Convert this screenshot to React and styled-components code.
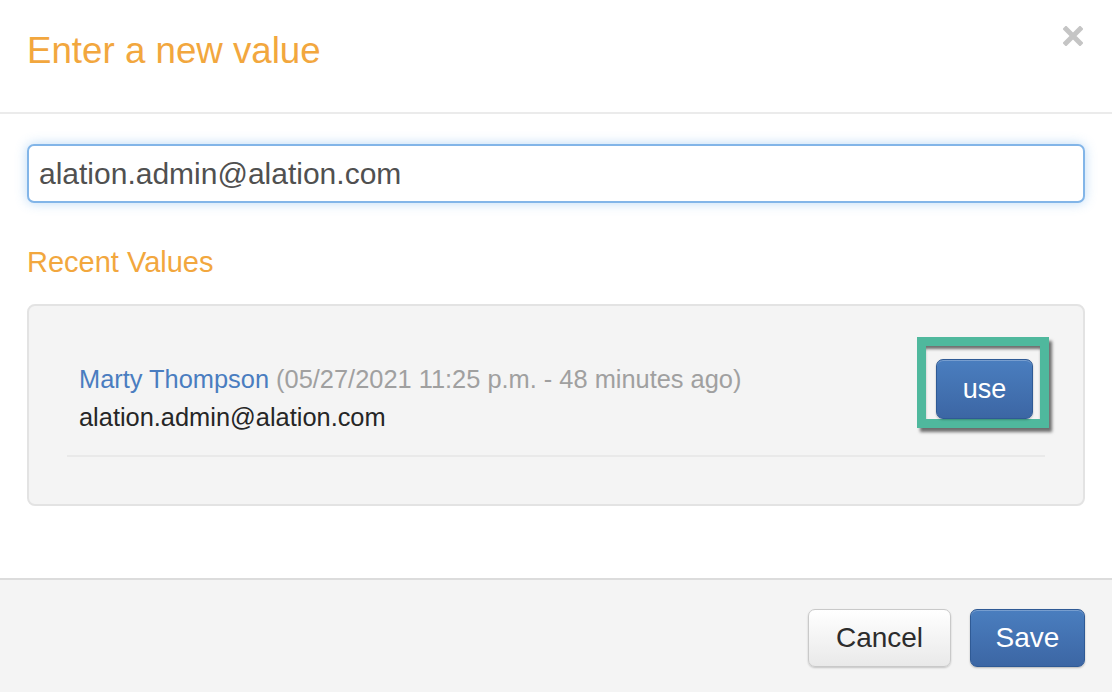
import React, { useEffect, useRef } from "react"
import styled, { createGlobalStyle } from "styled-components"

const GlobalStyle = createGlobalStyle`
  html, body {
    margin: 0;
    padding: 0;
    background: #ffffff;
  }
  body {
    font-family: "Liberation Sans", Arial, sans-serif;
  }
  * {
    box-sizing: border-box;
  }
`

const Modal = styled.div`
  display: flex;
  flex-direction: column;
  width: 1112px;
  height: 692px;
  background: #ffffff;
  overflow: hidden;
`

const Header = styled.div`
  display: flex;
  justify-content: space-between;
  align-items: flex-start;
  height: 114px;
  padding: 31px 29px 0 27px;
  border-bottom: 2px solid #ebebeb;
`

const Title = styled.h1`
  margin: 0;
  font-size: 36.7px;
  line-height: 40px;
  font-weight: normal;
  color: #f2a73e;
`

const CloseButton = styled.button`
  display: flex;
  margin-top: -5px;
  padding: 0;
  border: 0;
  background: transparent;
  cursor: pointer;
`

const Body = styled.div`
  flex: 1;
  display: flex;
  flex-direction: column;
  padding: 30px 27px 0 27px;
`

const ValueInput = styled.input`
  width: 100%;
  height: 59px;
  padding: 0 10px;
  border: 2px solid #82b5e8;
  border-radius: 7px;
  box-shadow: 0 0 12px rgba(102, 170, 235, 0.45);
  font-family: "Liberation Sans", Arial, sans-serif;
  font-size: 30px;
  color: #505050;
  outline: none;
  caret-color: #333;
`

const SectionTitle = styled.h2`
  margin: 42px 0 25px 0;
  font-size: 29px;
  line-height: 34px;
  font-weight: normal;
  color: #f2a73e;
`

const Panel = styled.div`
  padding: 31px 38px 47px 38px;
  background: #f4f4f4;
  border: 2px solid #e3e3e3;
  border-radius: 8px;
`

const Row = styled.div`
  display: flex;
  justify-content: space-between;
  align-items: flex-start;
  padding: 0 0 19px 12px;
  border-bottom: 2px solid #e9e9e9;
`

const Info = styled.div`
  padding-top: 23px;
  font-size: 25.4px;
  line-height: 38px;
`

const Author = styled.a`
  color: #4a7dc0;
  text-decoration: none;
`

const Meta = styled.span`
  color: #a0a0a0;
`

const Value = styled.div`
  color: #262626;
`

const Highlight = styled.div`
  width: 132px;
  height: 91px;
  margin-right: -4px;
  padding: 13px 7px 0 10px;
  border: 9px solid #4fb89d;
  background: #f4f4f4;
  box-shadow: inset 0 4px 3px -1px rgba(0, 0, 0, 0.55), 3px 4px 3px rgba(0, 0, 0, 0.55);
`

const BlueButton = styled.button`
  display: flex;
  align-items: center;
  justify-content: center;
  width: ${p => p.w}px;
  height: ${p => p.h}px;
  padding: 0;
  border: 1px solid #2f5a95;
  border-radius: 7px;
  background: linear-gradient(#4a7ebf, #3c66a4);
  box-shadow: inset 0 1px 0 rgba(255, 255, 255, 0.25), 0 1px 2px rgba(0, 0, 0, 0.25);
  color: #ffffff;
  font-family: "Liberation Sans", Arial, sans-serif;
  font-size: ${p => p.size}px;
  cursor: pointer;
`

const Footer = styled.div`
  display: flex;
  justify-content: flex-end;
  gap: 19px;
  height: 114px;
  padding: 29px 27px 0 0;
  border-top: 2px solid #dcdcdc;
  background: #f4f4f4;
`

const DefaultButton = styled.button`
  display: flex;
  align-items: center;
  justify-content: center;
  width: 143px;
  height: 58px;
  padding: 0;
  border: 1px solid #c9c9c9;
  border-radius: 7px;
  background: linear-gradient(#ffffff, #e9e9e9);
  box-shadow: 0 1px 2px rgba(0, 0, 0, 0.2);
  color: #2c2c2c;
  font-family: "Liberation Sans", Arial, sans-serif;
  font-size: 28px;
  cursor: pointer;
`

function CloseIcon() {
  return (
    <svg width="20" height="20" viewBox="0 0 20 20">
      <path d="M3 3 L17 17 M17 3 L3 17" stroke="#c5c5c5" strokeWidth="5" strokeLinecap="square" />
    </svg>
  )
}

function App() {
  const inputRef = useRef(null)

  useEffect(() => {
    if (inputRef.current) {
      inputRef.current.focus()
      inputRef.current.setSelectionRange(0, 0)
    }
  }, [])

  return (
    <>
      <GlobalStyle />
      <Modal>
        <Header>
          <Title>Enter a new value</Title>
          <CloseButton aria-label="close">
            <CloseIcon />
          </CloseButton>
        </Header>
        <Body>
          <ValueInput ref={inputRef} defaultValue="alation.admin@alation.com" />
          <SectionTitle>Recent Values</SectionTitle>
          <Panel>
            <Row>
              <Info>
                <div>
                  <Author href="#">Marty Thompson</Author>{" "}
                  <Meta>(05/27/2021 11:25 p.m. - 48 minutes ago)</Meta>
                </div>
                <Value>alation.admin@alation.com</Value>
              </Info>
              <Highlight>
                <BlueButton w={97} h={60} size={27}>use</BlueButton>
              </Highlight>
            </Row>
          </Panel>
        </Body>
        <Footer>
          <DefaultButton>Cancel</DefaultButton>
          <BlueButton w={115} h={58} size={28}>Save</BlueButton>
        </Footer>
      </Modal>
    </>
  )
}

export default App
